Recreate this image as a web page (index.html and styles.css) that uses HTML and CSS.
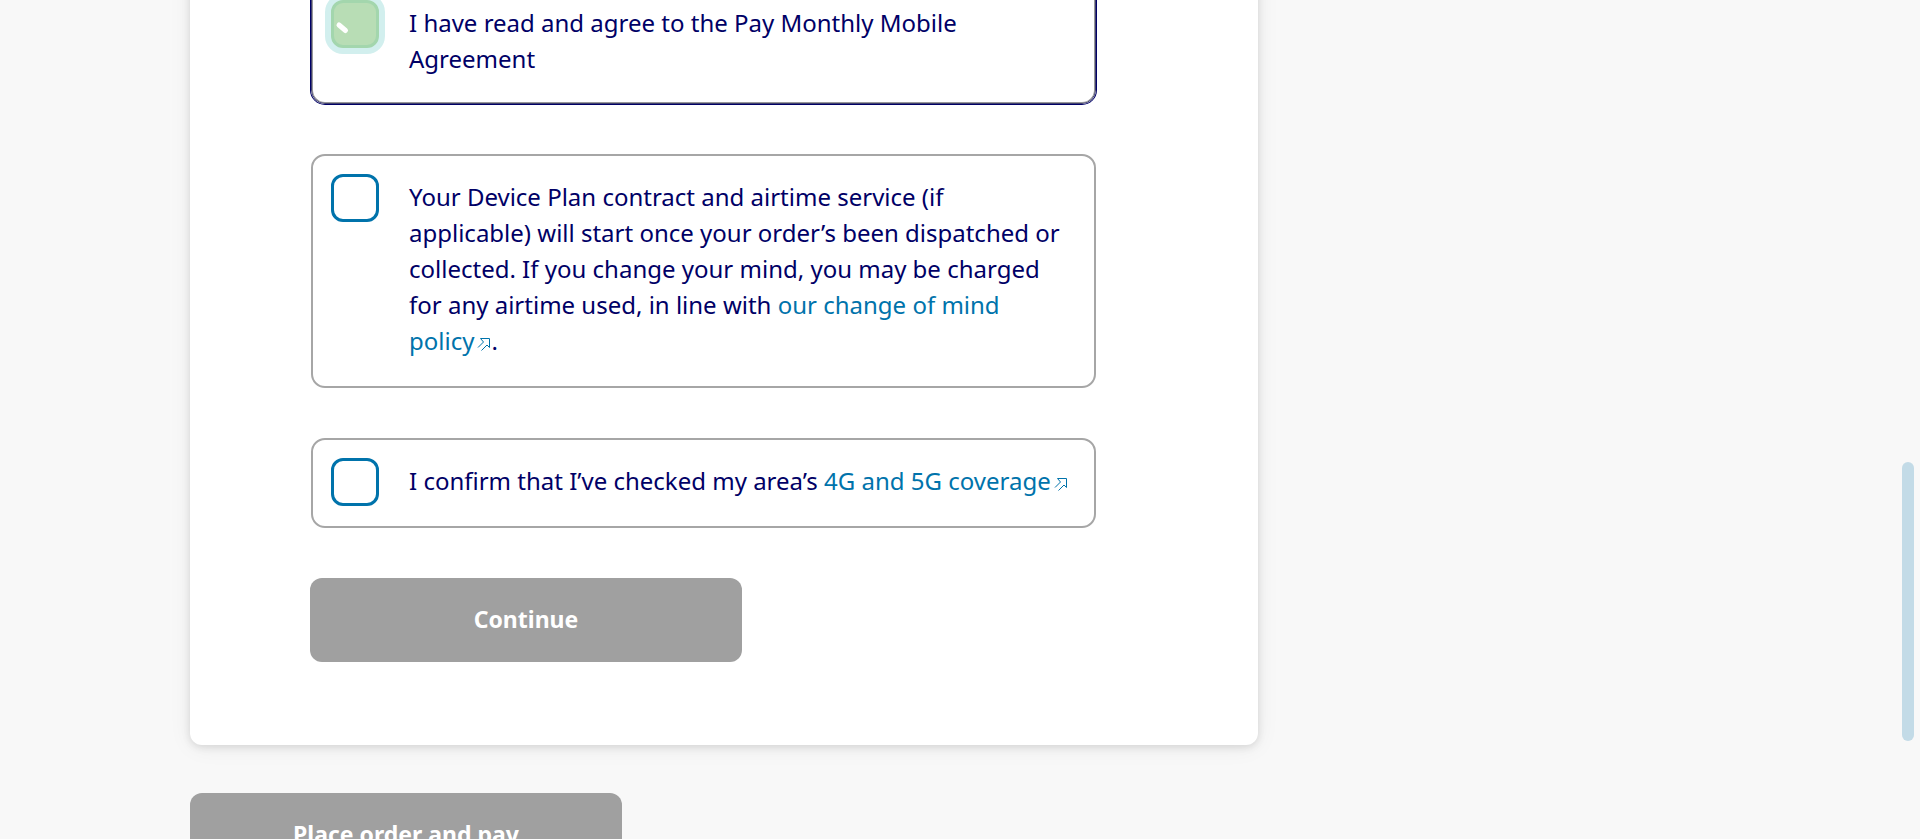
FILE: index.html
```html
<!DOCTYPE html>
<html lang="en">
<head>
<meta charset="utf-8">
<title>Checkout – agreements</title>
<link rel="stylesheet" href="styles.css">
</head>
<body>
<svg class="sprite" aria-hidden="true">
  <symbol id="external" viewBox="0 0 14 14">
    <path d="M1 10.500L6.500 5L3.500 1.500H12.500V10.500L10 8L4.500 13.500" fill="none" stroke="currentColor"/>
  </symbol>
</svg>
<main class="checkout">
  <form class="card">
    <div class="option option-selected">
      <input class="tick" type="checkbox" id="agreement" checked>
      <label class="option-text" for="agreement">I have read and agree to the Pay Monthly Mobile Agreement</label>
      <svg class="tick-mark" viewBox="0 0 48 48" aria-hidden="true"><path d="M8 25L14.500 30.500"/></svg>
    </div>
    <div class="option">
      <input class="tick" type="checkbox" id="device-plan">
      <label class="option-text" for="device-plan">Your Device Plan contract and airtime service (if applicable) will start once your order’s been dispatched or collected. If you change your mind, you may be charged for any airtime used, in line with <a href="#policy">our change of mind policy<svg class="external"><use href="#external"/></svg></a>.</label>
    </div>
    <div class="option option-wide">
      <input class="tick" type="checkbox" id="coverage">
      <label class="option-text" for="coverage">I confirm that I’ve checked my area’s <a href="#coverage-map">4G and 5G coverage<svg class="external"><use href="#external"/></svg></a></label>
    </div>
    <button class="button" type="button">Continue</button>
  </form>
  <button class="button" type="button">Place order and pay</button>
</main>
<div class="scroll-thumb"></div>
</body>
</html>
```

FILE: styles.css
```css
* {
  box-sizing: border-box;
}

body {
  margin: 0;
  height: 100vh;
  overflow: hidden;
  background: #f8f8f8;
  color: #000066;
  font-family: "Noto Sans", "Open Sans", sans-serif;
  font-size: 24px;
  line-height: 36px;
}

.sprite {
  display: none;
}

.checkout {
  display: flex;
  flex-direction: column;
  align-items: flex-start;
  gap: 48px;
  max-width: 1540px;
  margin: -40px auto 0;
}

.card {
  display: flex;
  flex-direction: column;
  align-items: flex-start;
  gap: 50px;
  width: 1068px;
  max-width: 100%;
  padding: 20px 161px 83px 120px;
  border-radius: 12px;
  background: #fff;
  box-shadow: 0 2px 8px rgba(0, 0, 0, 0.12), 0 2px 24px rgba(0, 0, 0, 0.06);
}

.option {
  position: relative;
  display: flex;
  align-self: stretch;
  align-items: flex-start;
  gap: 30px;
  margin: 0 1px;
  padding: 18px 28px 20px 18px;
  border: 2px solid #a6a6a6;
  border-radius: 14px;
}

.option-wide {
  padding-right: 8px;
}

.option-selected {
  padding: 19px 29px 19px 19px;
  border: 1px solid #40406e;
  box-shadow: 0 0 0 1px #000066, inset 0 0 0 1px #999;
}

.option-text {
  padding: 5px 0 7px;
}

.tick {
  flex: none;
  appearance: none;
  width: 48px;
  height: 48px;
  margin: 0;
  border: 3px solid #0073ab;
  border-radius: 12px;
  background: #fff;
}

.tick:checked {
  border-color: #a3d6ad;
  background: #b8ddb5;
  box-shadow: 0 0 0 6px #d2efee;
}

.tick-mark {
  position: absolute;
  top: 19px;
  left: 19px;
  width: 48px;
  height: 48px;
  fill: none;
  stroke: #fff;
  stroke-width: 5;
  stroke-linecap: round;
  pointer-events: none;
}

a {
  color: #0073ab;
  text-decoration: none;
}

.external {
  width: 14px;
  height: 14px;
  margin-left: 3px;
  vertical-align: -1px;
}

.button {
  width: 432px;
  max-width: 100%;
  height: 84px;
  padding: 0 0 2px;
  border: 0;
  border-radius: 12px;
  background: #a0a0a0;
  color: #fff;
  font: inherit;
  font-size: 23px;
  font-weight: 700;
}

.scroll-thumb {
  position: fixed;
  top: 462px;
  right: 6px;
  width: 12px;
  height: 279px;
  border-radius: 6px;
  background: #c3dbe7;
}
```
